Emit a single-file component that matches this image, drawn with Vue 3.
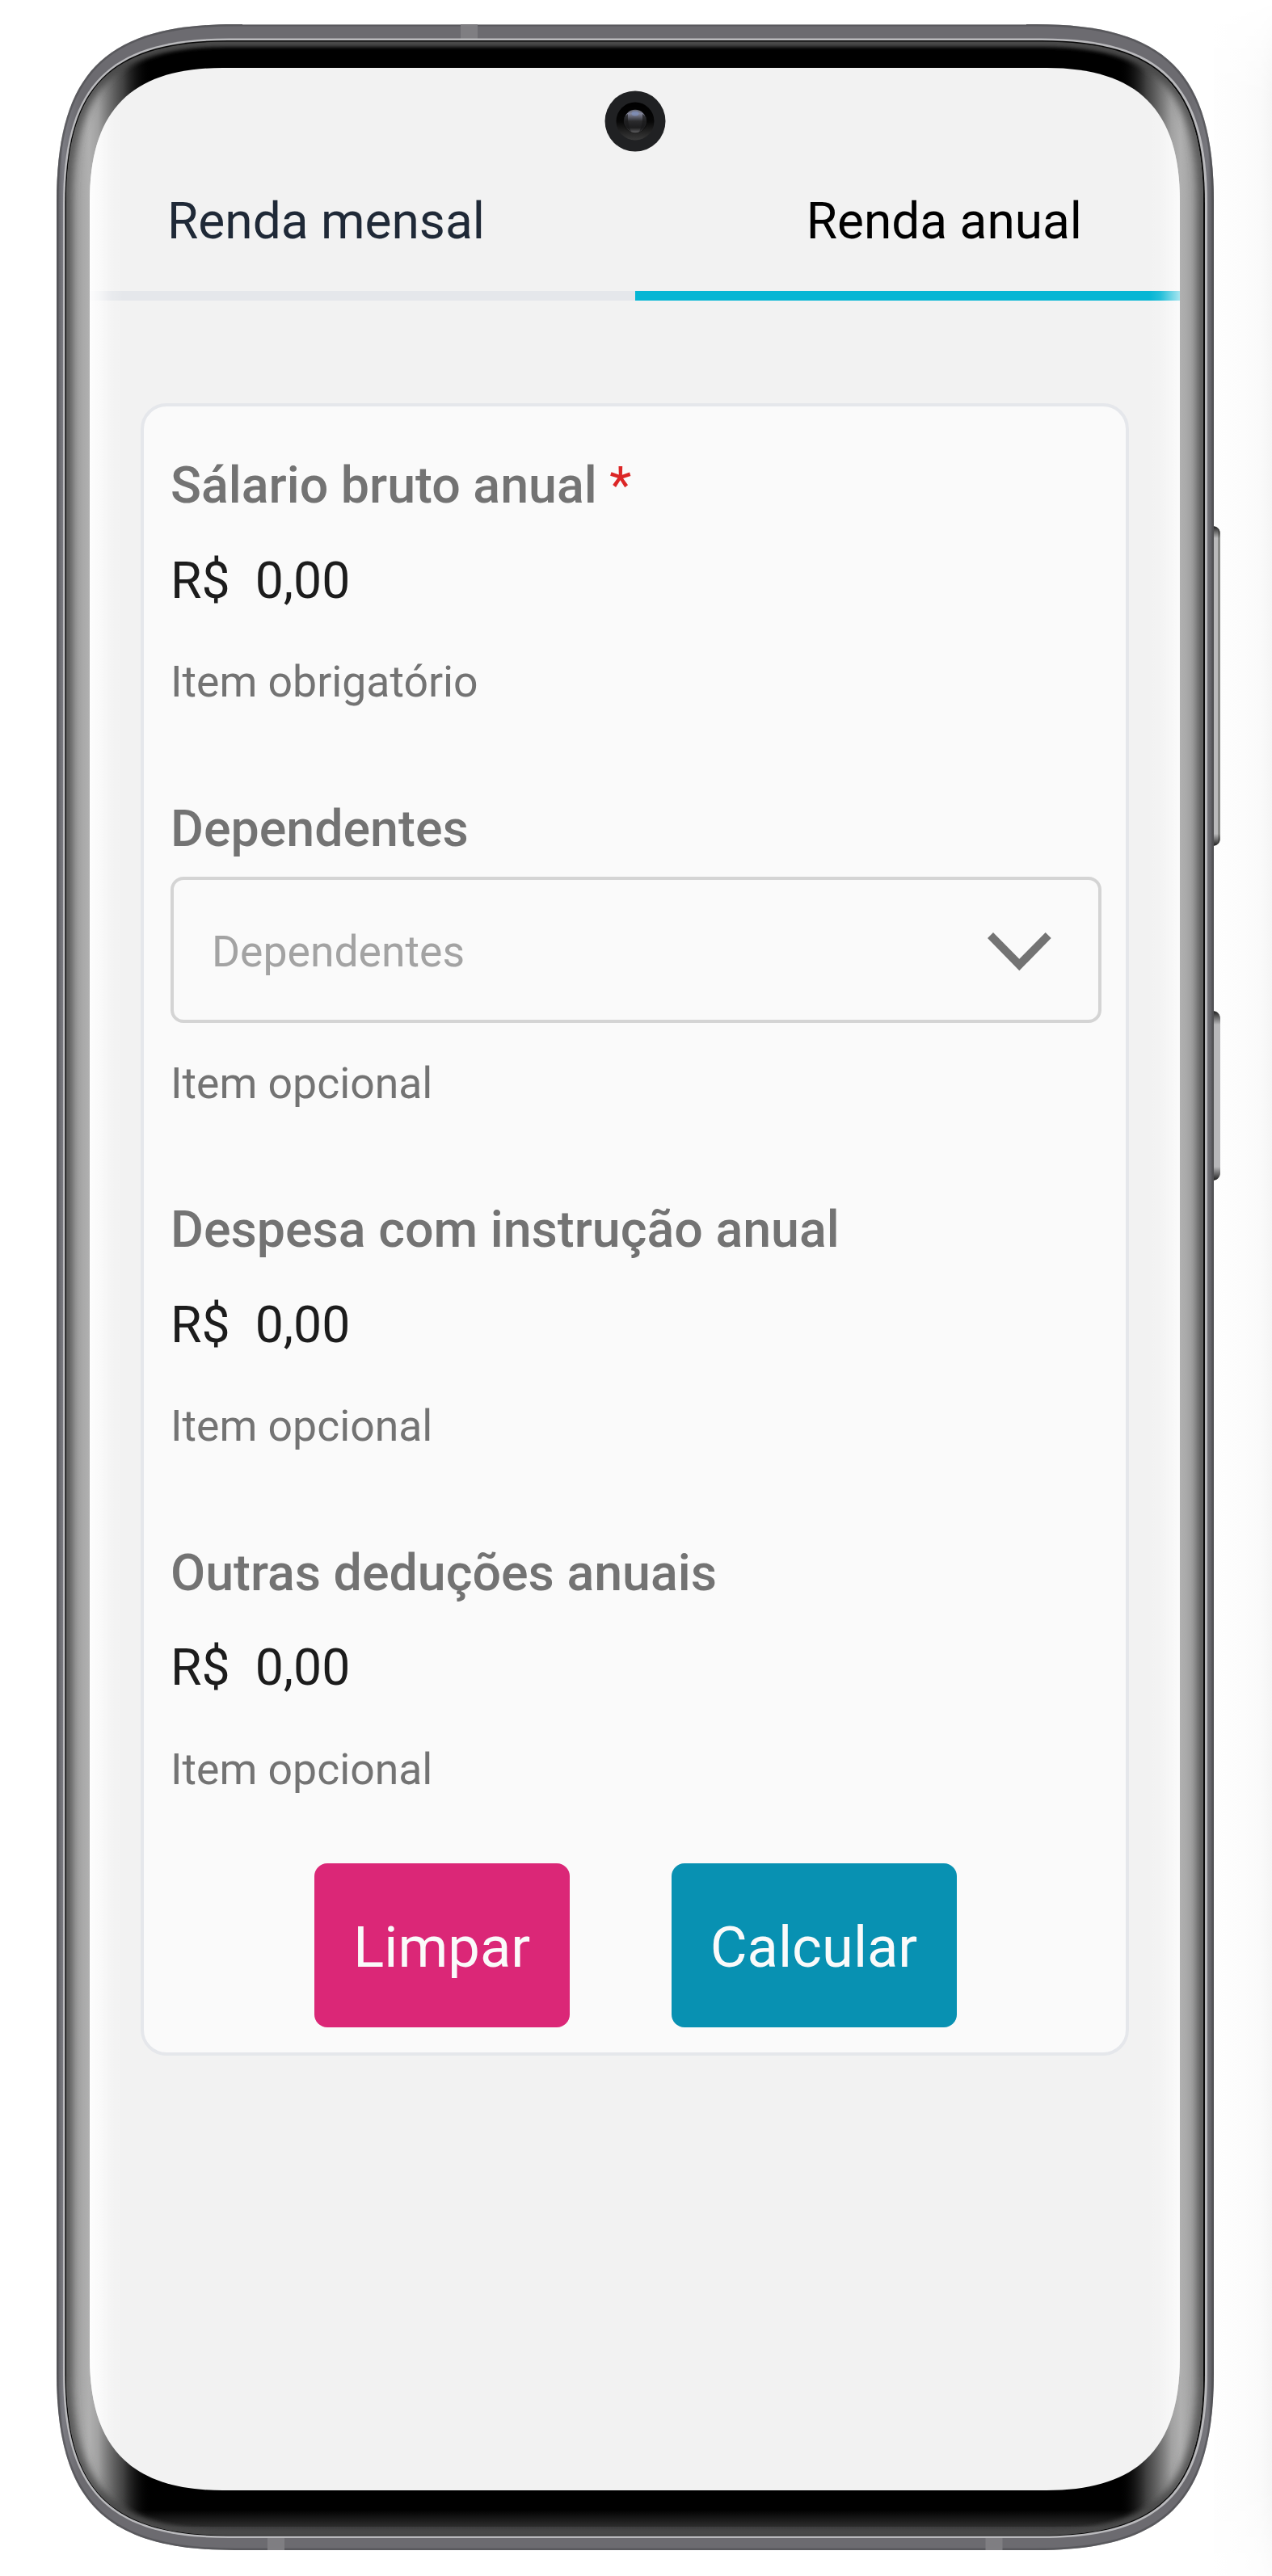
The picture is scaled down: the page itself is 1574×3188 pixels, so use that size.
<script setup>
const tabs = [
  { label: 'Renda mensal', active: false },
  { label: 'Renda anual', active: true },
]

const fields = [
  { label: 'Sálario bruto anual', required: true, type: 'money', hint: 'Item obrigatório' },
  { label: 'Dependentes', type: 'select', hint: 'Item opcional' },
  { label: 'Despesa com instrução anual', type: 'money', hint: 'Item opcional' },
  { label: 'Outras deduções anuais', type: 'money', hint: 'Item opcional' },
]

// Smooth-cornered rectangle: l is the corner length, c the control offset.
const squircle = (x1, y1, x2, y2, l, c) =>
  `M${x1} ${y1 + l}C${x1} ${y1 + c} ${x1 + c} ${y1} ${x1 + l} ${y1}` +
  `H${x2 - l}C${x2 - c} ${y1} ${x2} ${y1 + c} ${x2} ${y1 + l}` +
  `V${y2 - l}C${x2} ${y2 - c} ${x2 - c} ${y2} ${x2 - l} ${y2}` +
  `H${x1 + l}C${x1 + c} ${y2} ${x1} ${y2 - c} ${x1} ${y2 - l}Z`

const outer = squircle(70, 30, 1502, 3156, 220, 60)
const bright = squircle(78, 47.5, 1494, 3141, 205, 57)
const dark = squircle(80.5, 50, 1491, 3138.5, 202, 56)
const panel = squircle(82, 51.5, 1489, 3137.5, 200, 55.5)
</script>

<template>
  <div class="stage">
    <div class="side-glow"></div>
    <svg class="frame" width="1574" height="3188" viewBox="0 0 1574 3188" aria-hidden="true">
      <defs>
        <linearGradient id="metal" gradientUnits="userSpaceOnUse" x1="70" y1="0" x2="1502" y2="0">
          <stop offset="0" stop-color="#58585d" />
          <stop offset=".0055" stop-color="#7b7b82" />
          <stop offset=".02" stop-color="#6c6b70" />
          <stop offset=".98" stop-color="#6c6b70" />
          <stop offset=".9945" stop-color="#77777d" />
          <stop offset="1" stop-color="#535357" />
        </linearGradient>
        <linearGradient id="sheen" gradientUnits="userSpaceOnUse" x1="82" y1="0" x2="1489" y2="0">
          <stop offset="0" stop-color="#999" />
          <stop offset=".014" stop-color="#a8a8a8" />
          <stop offset=".02" stop-color="#b0b0b0" />
          <stop offset=".028" stop-color="#a6a6a6" stop-opacity=".97" />
          <stop offset=".05" stop-color="#666" stop-opacity=".65" />
          <stop offset=".074" stop-color="#000" stop-opacity="0" />
          <stop offset=".926" stop-color="#000" stop-opacity="0" />
          <stop offset=".95" stop-color="#666" stop-opacity=".65" />
          <stop offset=".972" stop-color="#a6a6a6" stop-opacity=".97" />
          <stop offset=".98" stop-color="#b0b0b0" />
          <stop offset=".986" stop-color="#a8a8a8" />
          <stop offset="1" stop-color="#999" />
        </linearGradient>
        <linearGradient id="chin" x1="0" y1="0" x2="0" y2="1">
          <stop offset="0" stop-color="#000" />
          <stop offset=".65" stop-color="#2c2c2c" />
          <stop offset=".67" stop-color="#3d3d3e" />
          <stop offset="1" stop-color="#48484a" />
        </linearGradient>
        <linearGradient id="ring" x1="0" y1="0" x2="0" y2="1">
          <stop offset="0" stop-color="#000" />
          <stop offset=".5" stop-color="#060606" />
          <stop offset="1" stop-color="#3a3a3a" />
        </linearGradient>
        <linearGradient id="lens" x1="0" y1="0" x2="0" y2="1">
          <stop offset="0" stop-color="#666772" />
          <stop offset=".18" stop-color="#83869a" />
          <stop offset=".5" stop-color="#2a2a2c" />
          <stop offset=".78" stop-color="#1d1d1e" />
          <stop offset="1" stop-color="#606062" />
        </linearGradient>
        <linearGradient id="key" x1="0" y1="0" x2="0" y2="1">
          <stop offset="0" stop-color="#1c1c1c" />
          <stop offset="1" stop-color="#1c1c1c" stop-opacity="0" />
        </linearGradient>
        <linearGradient id="keyEnd" x1="0" y1="1" x2="0" y2="0">
          <stop offset="0" stop-color="#1c1c1c" />
          <stop offset="1" stop-color="#1c1c1c" stop-opacity="0" />
        </linearGradient>
        <filter id="soft" filterUnits="userSpaceOnUse" x="60" y="20" width="1460" height="3150">
          <feGaussianBlur stdDeviation="6 2" />
        </filter>
        <clipPath id="panelClip"><path :d="panel" /></clipPath>
        <clipPath id="outerClip"><path :d="outer" /></clipPath>
        <clipPath id="keyA"><path d="M1500 651C1506 651 1510 655 1510 661V1037C1510 1043 1506 1047 1500 1047Z" /></clipPath>
        <clipPath id="keyB"><path d="M1500 1251C1506 1251 1510 1255 1510 1261V1451C1510 1457 1506 1461 1500 1461Z" /></clipPath>
      </defs>

      <g clip-path="url(#keyA)">
        <rect x="1500" y="651" width="10" height="396" fill="#bababb" />
        <rect x="1507" y="651" width="3" height="396" fill="#888987" />
        <rect x="1500" y="651" width="10" height="15" fill="url(#key)" />
        <rect x="1500" y="1032" width="10" height="15" fill="url(#keyEnd)" />
      </g>
      <g clip-path="url(#keyB)">
        <rect x="1500" y="1251" width="10" height="210" fill="#b8b8ba" />
        <rect x="1500" y="1251" width="10" height="17" fill="url(#key)" />
        <rect x="1500" y="1444" width="10" height="17" fill="url(#keyEnd)" />
      </g>

      <path :d="outer" fill="url(#metal)" />
      <g clip-path="url(#outerClip)">
        <path :d="outer" fill="none" stroke="#4c4c50" stroke-width="5" opacity=".6" />
        <rect x="300" y="30" width="970" height="1" fill="#9a9a9c" />
        <rect x="570" y="30" width="21" height="18" fill="#7f7e82" />
        <rect x="331" y="3140" width="21" height="16" fill="#7f7e82" />
        <rect x="1219.500" y="3140" width="21" height="16" fill="#7f7e82" />
      </g>
      <path :d="bright" fill="#b9b9bc" />
      <path :d="dark" fill="#0a0a0a" />
      <g clip-path="url(#panelClip)">
        <path :d="panel" fill="#000" />
        <rect x="82" y="3106" width="1407" height="32" fill="url(#chin)" />
        <rect x="82" y="51" width="1407" height="3087" fill="url(#sheen)" />
        <path :d="panel" fill="none" stroke="#4a4a4a" stroke-width="13" filter="url(#soft)" />
      </g>
    </svg>

    <main class="screen">
      <nav class="tabs">
        <div v-for="tab in tabs" :key="tab.label" class="tab" :class="{ active: tab.active }">
          {{ tab.label }}
        </div>
      </nav>

      <form class="card" @submit.prevent>
        <section v-for="field in fields" :key="field.label" class="field">
          <label class="label">{{ field.label }}<span v-if="field.required" class="star"> *</span></label>
          <div v-if="field.type === 'money'" class="money">
            <span class="currency">R$</span><span>0,00</span>
          </div>
          <div v-else class="select">
            <span>Dependentes</span>
            <svg width="79" height="48" viewBox="0 0 79 48" aria-hidden="true">
              <path d="M0 7L7 0L39.3 32.7L71.7 0L78.700 7L39.300 47.300Z" fill="#737373" />
            </svg>
          </div>
          <p class="hint">{{ field.hint }}</p>
        </section>
        <div class="actions">
          <button type="button" class="btn clear">Limpar</button>
          <button type="button" class="btn calc">Calcular</button>
        </div>
      </form>
    </main>

    <svg class="camera" width="76" height="76" viewBox="-38 -38 76 76" aria-hidden="true">
      <circle r="37.500" fill="#202123" />
      <circle r="23.500" fill="url(#ring)" />
      <circle r="14.500" fill="#0c0c0c" />
      <ellipse rx="13.800" ry="14.300" fill="url(#lens)" />
      <path d="M-14 -5Q-14 7 -5 13.500Q-10 2 -9 -9ZM14 -5Q14 7 5 13.500Q10 2 9 -9Z" fill="#1a1a1b" opacity=".7" />
      <ellipse cy="-9.500" rx="4.500" ry="3" fill="#7f93c4" opacity=".6" />
    </svg>
  </div>
</template>

<style>
body {
  margin: 0;
  background: #fff;
}
</style>

<style scoped>
.stage {
  position: relative;
  box-sizing: border-box;
  width: 1574px;
  height: 3188px;
  padding: 84px 114px 0 111px;
  overflow: hidden;
  background: #fff;
  font-family: Roboto, sans-serif;
}
.side-glow {
  position: absolute;
  top: 0;
  right: 0;
  width: 72px;
  height: 100%;
  background: linear-gradient(90deg, #fefefe, #fcfcfc 50%, #fafafa 80%, #f5f5f5);
  mask-image: linear-gradient(transparent, #000 120px, #000 3080px, transparent 3240px);
}
.frame {
  position: absolute;
  top: 0;
  left: 0;
}
.camera {
  position: absolute;
  top: 112px;
  left: 748px;
}
.screen {
  position: relative;
  width: 1349px;
  height: 2998px;
  background: #f2f2f2;
  clip-path: path('M0 165C0 52 52 0 165 0H1184C1297 0 1349 52 1349 165V2833C1349 2946 1297 2998 1184 2998H165C52 2998 0 2946 0 2833Z');
}
.screen::after {
  content: '';
  position: absolute;
  inset: 0;
  background: linear-gradient(
    90deg,
    rgba(255, 255, 255, 0.9),
    rgba(255, 255, 255, 0.6) 13px,
    rgba(255, 255, 255, 0.15) 27px,
    rgba(255, 255, 255, 0) 42px,
    rgba(255, 255, 255, 0) 1311px,
    rgba(255, 255, 255, 0.12) 1325px,
    rgba(255, 255, 255, 0.65) 1349px
  );
}
.tabs {
  display: grid;
  grid-template-columns: 50% 50%;
  height: 288px;
}
.tab {
  box-sizing: border-box;
  padding: 143px 0 0 96px;
  border-bottom: 12px solid #e5e7eb;
  color: #1f2937;
  font-size: 62.2px;
  line-height: 94px;
  white-space: nowrap;
}
.tab.active {
  padding: 143px 121px 0 0;
  border-color: #06b6d4;
  color: #000;
  text-align: right;
}
.card {
  box-sizing: border-box;
  width: 1223px;
  margin: 127px 0 0 63px;
  padding: 51px 30.5px 31.5px 33px;
  border: 4px solid #e5e7eb;
  border-radius: 32px;
  background: #fafafa;
}
.field + .field {
  margin-top: 94.3px;
}
.label {
  display: block;
  color: #737373;
  font-size: 62.7px;
  font-weight: 500;
  line-height: 94px;
}
.star {
  color: #dc2626;
  font-weight: 400;
}
.money {
  display: flex;
  gap: 31px;
  margin: 23.8px 0 38.5px;
  color: #1c1c1c;
  font-size: 62.5px;
  line-height: 94px;
}
.select {
  box-sizing: border-box;
  display: flex;
  align-items: center;
  justify-content: space-between;
  height: 181px;
  margin: 12.7px 0 34.4px;
  padding: 4px 57.7px 0 47px;
  border: 4px solid #d4d4d4;
  border-radius: 16px;
  color: #a3a3a3;
  font-size: 53.5px;
  line-height: 80px;
}
.hint {
  margin: 0;
  color: #737373;
  font-size: 53.5px;
  line-height: 80px;
}
.actions {
  display: flex;
  gap: 125.5px;
  margin: 76px 0 0 177.5px;
}
.btn {
  box-sizing: border-box;
  height: 203px;
  padding: 6px 0 0;
  border: 0;
  border-radius: 16px;
  color: #fafafa;
  font: 400 70.5px/94px Roboto, sans-serif;
}
.clear {
  width: 316.5px;
  background: #db2777;
}
.calc {
  width: 353px;
  background: #0891b2;
}
</style>
